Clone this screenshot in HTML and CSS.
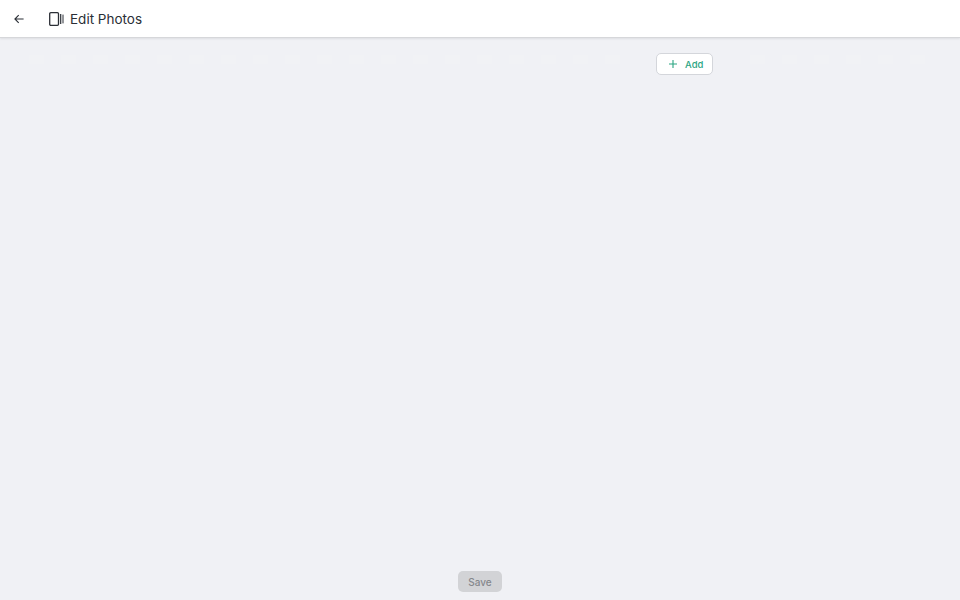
FILE: index.html
```html
<!DOCTYPE html>
<html lang="en">
<head>
    <meta charset="UTF-8">
    <title>Edit Photos</title>
    <link rel="stylesheet" href="styles.css">
</head>
<body>
    <header class="topbar">
        <button class="back-btn" type="button" aria-label="Back">
            <svg width="10" height="10" viewBox="0 0 10 10" fill="none" stroke="#2b2f36" stroke-width="1.1">
                <path d="M9.6 5H.9M4.7 1.1L.9 5l3.8 3.9"/>
            </svg>
        </button>
        <svg class="title-icon" width="15" height="14" viewBox="0 0 15 14" fill="none" stroke="#2b2f36">
            <rect x=".7" y=".7" width="8.8" height="12.6" rx="1.1" stroke-width="1.3"/>
            <path d="M11.7 2v10" stroke-width="1.2"/>
            <path d="M14 2.6v8.8" stroke-width="1"/>
        </svg>
        <h1 class="title">Edit Photos</h1>
    </header>
    <main class="content">
        <div class="toolbar">
            <div class="ghost-row" aria-hidden="true">
                <span></span><span></span><span></span><span></span><span></span><span></span>
                <span></span><span></span><span></span><span></span><span></span><span></span>
                <span></span><span></span><span></span><span></span><span></span><span></span>
                <span></span>
            </div>
            <button class="add-btn" type="button">
                <svg width="8" height="8" viewBox="0 0 8 8" fill="none" stroke="#2aa582" stroke-width="1.1">
                    <path d="M4 0v8M0 4h8"/>
                </svg>
                Add
            </button>
            <div class="ghost-row ghost-row-right" aria-hidden="true">
                <span></span><span></span><span></span><span></span><span></span><span></span>
            </div>
        </div>
        <div class="footer">
            <button class="save-btn" type="button" disabled>Save</button>
        </div>
    </main>
</body>
</html>
```

FILE: styles.css
```css
* {
    box-sizing: border-box;
}
html, body {
    height: 100%;
}
body {
    margin: 0;
    display: flex;
    flex-direction: column;
    font-family: Inter, "Liberation Sans", sans-serif;
    background-color: #f0f1f5;
    overflow: hidden;
}
button {
    font-family: inherit;
}
.topbar {
    height: 38px;
    flex: none;
    display: flex;
    align-items: center;
    padding-left: 14px;
    background-color: #fff;
    border-bottom: 1px solid #d6d7da;
    box-shadow: 0 1px 2px rgba(0, 0, 0, 0.08);
}
.back-btn {
    width: 10px;
    height: 10px;
    padding: 0;
    display: flex;
    border: none;
    background: none;
    cursor: pointer;
}
.title-icon {
    margin-left: 25px;
}
.title {
    margin: 0 0 0 6px;
    font-size: 13.5px;
    font-weight: 400;
    color: #2b2f36;
}
.content {
    flex: 1;
    display: flex;
    flex-direction: column;
    justify-content: space-between;
}
.toolbar {
    display: flex;
    align-items: flex-start;
    padding: 15px 0 0 29px;
}
.ghost-row {
    width: 627px;
    flex: none;
    display: flex;
    gap: 17px;
    padding-top: 2px;
}
.ghost-row span {
    width: 15px;
    height: 9px;
    background-color: #f1f2f5;
}
.ghost-row-right {
    width: auto;
    margin-left: 37px;
}
.add-btn {
    width: 57px;
    height: 22px;
    flex: none;
    padding: 0 0 0 12px;
    display: flex;
    align-items: center;
    gap: 8px;
    background-color: #fff;
    border: 1px solid #d4d6db;
    border-radius: 5px;
    font-size: 9.5px;
    font-weight: 500;
    color: #2aa582;
    cursor: pointer;
}
.footer {
    display: flex;
    justify-content: center;
    padding-bottom: 8px;
}
.save-btn {
    width: 44px;
    height: 21px;
    padding: 0;
    background-color: #d2d3d6;
    border: none;
    border-radius: 5px;
    font-size: 10px;
    font-weight: 500;
    color: #85878c;
}
```
